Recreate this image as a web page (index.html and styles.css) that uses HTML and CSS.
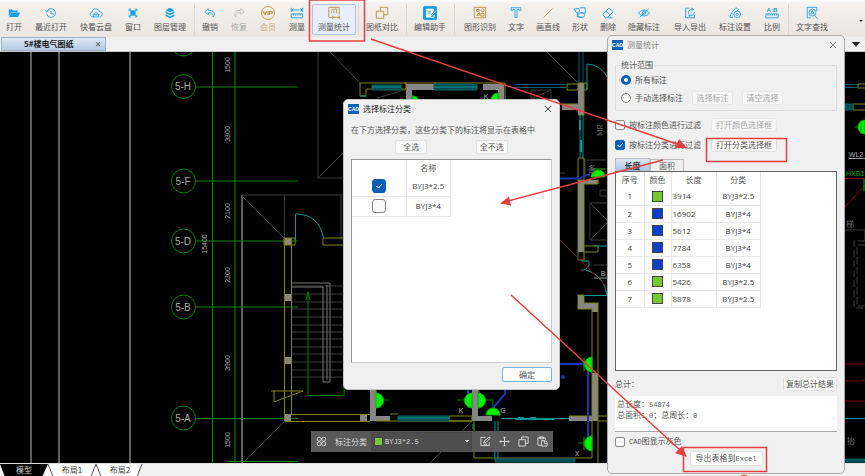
FILE: index.html
```html
<!DOCTYPE html>
<html lang="zh-CN">
<head>
<meta charset="utf-8">
<meta name="viewport" content="width=device-width, initial-scale=1">
<title>5#楼电气图纸</title>
<link rel="stylesheet" href="styles.css">
</head>
<body>
<div class="app">
  <header class="toolbar">
    <div class="group">
      <button class="tool"><svg viewBox="0 0 16 16"><path class="solid" d="M2 4h4l1 1h5v2H5l-3 5z"/><path class="solid" d="M5 7.500h10l-2.500 5H2.500z"/></svg>打开</button>
      <button class="tool"><svg viewBox="0 0 16 16"><path d="M3.500 6A5 5 0 1 1 3.200 9M1.500 5l2 2 2-2M8 5.500V9h3"/></svg>最近打开</button>
      <button class="tool"><svg viewBox="0 0 16 16"><path d="M4.500 12.500C0 12 1 7 3.500 7 4 2 11 2 12 6.500c4 0 4 6 0 6M5 12.500V9.500l3-2 3 2v3zM5 10h6"/></svg>快看云盘</button>
      <button class="tool"><svg viewBox="0 0 16 16"><path class="solid" d="M5 5h6v6H5z"/><path d="M3.500 6V3.500H6M10 3.500h2.500V6M3.500 10v2.500H6M12.500 10v2.500H10M4 4l2 2M12 4l-2 2M4 12l2-2M12 12l-2-2"/></svg>窗口</button>
      <button class="tool"><svg viewBox="0 0 16 16"><path class="solid" d="M8 2l5 2.500L8 7 3 4.500zM3 6l5 2.500L13 6v2L8 10.500 3 8zM3 9.500L8 12l5-2.500v2L8 14l-5-2.500z"/></svg>图层管理</button>
    </div>
    <div class="group ruled">
      <button class="tool"><svg viewBox="0 0 16 16"><path d="M6 3L2 6.500 6 10V8c4-1 6 1 5.500 4.500C15 9 12 4.500 6 5z"/></svg>撤销</button>
      <button class="tool muted"><svg viewBox="0 0 16 16"><path d="M10 3l4 3.500L10 10V8c-4-1-6 1-5.500 4.500C1 9 4 4.500 10 5z"/></svg>恢复</button>
      <button class="tool vip"><svg viewBox="0 0 16 16"><circle cx="8" cy="8" r="7.400"/><text x="8" y="10.500">VIP</text></svg>会员</button>
      <button class="tool"><svg viewBox="0 0 16 16"><path d="M1.500 2v5M14.500 2v5M2 4.500h12M4 3L2 4.500 4 6M12 3l2 1.500L12 6M1.500 9h13v4.500h-13zM4 9v2M6.500 9v2M9 9v2M11.500 9v2"/></svg>测量</button>
      <button class="tool gold active"><svg viewBox="0 0 16 16"><path d="M6 13H2V1.500h12V10M5 8.500V6M8 8.500V5M11 8.500V3.500M4.500 5l3-1.500 1 .5 2.500-1.500M6.500 11v4M14.500 11v4M7 13h7M8.500 12L7 13l1.500 1M12.500 12l1.500 1-1.500 1"/></svg>测量统计</button>
    </div>
    <div class="group ruled">
      <button class="tool gold"><svg viewBox="0 0 16 16"><path d="M6 6V1.500h8.500v8.500H10M1.500 6H10v8H1.500z"/></svg>图纸对比</button>
    </div>
    <div class="group ruled">
      <button class="tool"><svg viewBox="0 0 16 16"><rect class="solid" width="16" height="16" rx="2"/><path class="white-fill" d="M3.500 3h9v3L9 10v3H3.500z"/><path class="white" d="M9 12l5-6M12.500 10v3H9"/><path d="M5 6h4.500M5 8h4"/></svg>编辑助手</button>
    </div>
    <div class="group ruled tight">
      <button class="tool gold"><svg viewBox="0 0 16 16"><path d="M1.500 1.500h13v12h-13zM4 10.500h3.500v-3zM9 8.500h3.500v3H9zM4 4h3v2H4z"/><circle cx="11" cy="5" r="1.700"/></svg>图形识别</button>
      <button class="tool"><svg viewBox="0 0 16 16"><path d="M2.500 5V2h11v3h-2V4H9.200v9h-2.400V4H4.500v1z"/></svg>文字</button>
      <button class="tool gold"><svg viewBox="0 0 16 16"><path d="M3 13L13 3"/></svg>画直线</button>
      <button class="tool"><svg viewBox="0 0 16 16"><path d="M8 2h6v6H9M1.500 3.500l5-1 1 3.500-3 2.500zM5 7v5.500h5"/><ellipse cx="9.500" cy="10.500" rx="4" ry="2.700"/></svg>形状</button>
      <button class="tool"><svg viewBox="0 0 16 16"><path d="M2 9.500L9 2.500l5 4-7 7H5zM5.500 6l5 4M7 13.500h6"/></svg>删除</button>
      <button class="tool"><svg viewBox="0 0 16 16"><path d="M1.500 8Q8 1 14.500 8 8 15 1.500 8zM3 13L13.500 3"/><circle cx="8" cy="8" r="2"/></svg>隐藏标注</button>
    </div>
    <div class="group">
      <button class="tool"><svg viewBox="0 0 16 16"><path d="M7 2.500H3v11h10V10M6 9c0-4 2-5 5-5M9 2l3 2-3 2M13 7c0 3-3 4-6 4M8.500 9.500L6.500 11l2 1.500"/></svg>导入导出</button>
      <button class="tool"><svg viewBox="0 0 16 16"><path d="M2 13l2-5 5-6 3 2-2 2M2 13h4M4 8l2 2"/><circle cx="10.500" cy="9.500" r="3.800"/><circle cx="10.500" cy="9.500" r="1.300"/></svg>标注设置</button>
      <button class="tool ratio"><svg viewBox="0 0 16 16"><text x="8" y="6.500">A:B</text><path d="M1 9h14v4.500H1zM3.500 9v2M6 9v2M8.500 9v2M11 9v2M13 9v2"/></svg>比例</button>
    </div>
    <div class="group ruled">
      <button class="tool"><svg viewBox="0 0 16 16"><path d="M7 13.500H2.500v-12h11V6M11.500 11.500l3 3M6.500 9.500L8.500 5l2 4.500M7 8h3"/><circle cx="8.500" cy="7.500" r="4"/></svg>文字查找</button>
    </div>
    <button class="more" aria-label="更多"></button>
  </header>

  <nav class="doc-tabs">
    <div class="doc-tab"><span class="doc-name">5#楼电气图纸</span><button class="doc-close" aria-label="关闭图纸">×</button></div>
    <button class="tab-list" aria-label="图纸列表"></button>
  </nav>

  <main class="canvas">
    <svg class="drawing" viewBox="0 52 865 411" preserveAspectRatio="xMinYMin slice" aria-label="电气平面图">
      <g class="frame"><path d="M31 52V463M59 52V463M130 52V463M242 195V463"/></g>
      <g class="thin">
        <path d="M318 52V178H345M318 178l27-27M330 52l30 31M242 195H345M242 196l42 42M284.500 195V238M341 195V240M285 421L245 461M430 463l42-42M547 52l31 31M531 90h20v9h-20zM531 99l20-9M377 98l28-8"/>
        <path d="M292 286h52M292 294h52M292 302h52M292 309h52M292 317h52M292 325h52M292 332h52M292 339h52M292 347h52M292 354h52M292 362h52M292 370h52M292 377h52"/>
        <path class="lit" d="M292 283h38v99h-7V287h-31M327 285v95"/>
        <path d="M584 160h24M585 160v17M590 203h18v37h-18zM590 203l18 18M590 240l18-18M600 190h8v6h-8zM594 265h14M560 173h5M844 230h21v10"/>
        <path stroke-dasharray="7 3" d="M865 241h-11v67h11M865 245h-8v61h8"/>
      </g>
      <g class="axis">
        <path class="bright" d="M212.500 52V463M235 52V463"/>
        <path d="M195.500 87H298M195.500 181H298M195.500 241H298M195.500 307H298M195.500 418.500H298M228 461.500H298M308 292V395.500H344V284M306 300l2-8 2 8"/>
        <circle cx="183.500" cy="44" r="12"/><circle cx="183.500" cy="86.500" r="12"/><circle cx="183.500" cy="181" r="12"/><circle cx="183.500" cy="241" r="12"/><circle cx="183.500" cy="307" r="12"/><circle cx="183.500" cy="418" r="12"/>
        <path d="M377 400h12M457 400h36v10M854 127h6M578 443h8"/>
      </g>
      <g class="mark">
        <text x="183" y="90">5-H</text><text x="183" y="185">5-F</text><text x="183" y="245">5-D</text><text x="183" y="311">5-B</text><text x="183" y="422">5-A</text>
      </g>
      <g class="dim">
        <text transform="translate(230 65) rotate(-90)">1500</text><text transform="translate(230 134) rotate(-90)">3300</text><text transform="translate(230 211) rotate(-90)">2100</text><text transform="translate(207 244) rotate(-90)">15400</text><text transform="translate(230 275) rotate(-90)">2300</text><text transform="translate(230 363) rotate(-90)">3900</text><text transform="translate(230 440) rotate(-90)">1500</text>
        <text x="486" y="99">K</text><text x="461" y="413">K</text><text x="503" y="413">G</text><text x="577" y="456">X</text><text x="603" y="276">B</text><text x="856" y="157">WL2</text>
      </g>
      <path class="white-line" d="M849 158.500h16M594 278h14"/>
      <g class="wall">
        <path d="M284 238h7v7h-7zM284 294h7v7h-7zM284 357h7v7h-7zM284 414h7v7h-7zM360 414h7v7h-7z"/>
        <path d="M406 84h28v6h-22v10h-6zM483 84h21v16h-6V90h-15zM578 83h6v32h-6v-5h-16v-6h16zM578 180h20v4h-14v68h-6zM578 295h6v8h14v9h-6v-3h-14zM592 373h6v48h-29v-5h23zM370 389h6v27h14v5h-20zM472 389h6v27h14v5h-20z"/>
      </g>
      <g class="yellow">
        <path d="M284.500 238V421M291.500 238V414M284 238h11v7h-11zM345 238h-22v7h22M291 414.500h79M285 421.500h85M271 391h32l-29 11v-11"/>
        <path d="M360 83h46v6h-40v7h-6zM404 83h32M434 83h64M498 83h7v17M567 84h11v6h-11zM578 83h6v32h-6M584 83h3v7h-3M562 104h16M578 158h6v22h-6zM578 180v80h6v-76h14v-5M584 246h14v6h-14M578 295h6v8h14v160M578 295v14h14v149M449 416h23v5h-23zM376 421h96M390 414h8M376 389v9M478 389l4 10M569 416h23M598 416h10v5h-10M474 421v37h118M865 84h-7v4h7M865 104h-12v6h12"/>
      </g>
      <g class="teal">
        <path d="M295.500 240V214Q319 214 323.500 238"/>
        <path class="dark" d="M372 85h29v5h-29zM434 84h43v6h-43zM398 416h51v5h-51zM495 459h80v3h-80zM844 459h21v3h-21zM844 104h9v6h-9z"/>
        <path class="dim-teal" d="M579 52v31M583 52v31M514 84.500h53M514 87.500h53M844 84.500h14M844 87.500h14"/>
        <path d="M372 87h29M434 87h43M398 418h51M360 96h6"/>
        <path d="M580 115v43M583 115v43M587 90V64Q600 64 608 78M594 246h14M581 261h8v4q-3 6-8 5M586 270q18 5 21 25M583 295.500h25M501 418.500h68M515 419.500h40M844 418.500h21M495 421v38M498 421v38M473 424v5"/>
        <path class="thick" d="M580 120v10M581 140v12M518 418h6M530 418h6"/>
      </g>
      <path class="red" d="M560 240l48 48M844 364h21M844 381h19l2-3M844 401h21M844 178.500h21M844 208l21-23"/>
      <path class="blue" d="M560 178.500h20q6-4 10-4M560 364h26M588 364v79M505 389v5l-13 15M468 389v7"/>
      <circle class="blue" cx="563" cy="377" r="1"/>
      <g class="outlet">
        <path d="M376 393a7.500 7.500 0 0 1 0 15zM472 393a7.500 7.500 0 0 0 0 15zM478 393a7.500 7.500 0 0 1 0 15zM486 415a7 7 0 0 1 14 0zM592 357a7.500 7.500 0 0 0 0 15zM592 436a7.500 7.500 0 0 0 0 15zM591 177a7 7 0 0 1 14 0zM412 100v-4q6 0 6 4zM498 93a7 7 0 0 0-7 7h7zM865 120a7 7 0 0 0 0 14z"/>
        <path d="M584 358v13M584 437v13M861 121v13M591 169h14M864 179v12"/>
      </g>
      <text class="panel-mark" x="846" y="176">HXB1</text>
      <g class="note"><text transform="translate(603 136) rotate(-90)">MR</text><text x="588" y="172">备</text><text x="846" y="227">梯</text><text x="847" y="444">抬</text></g>
    </svg>

    <div class="quick-bar">
      <svg class="quick-icon" viewBox="0 0 12 12"><circle cx="3.500" cy="3.500" r="2.200"/><circle cx="8.500" cy="3.500" r="2.200"/><circle cx="3.500" cy="8.500" r="2.200"/><circle cx="8.500" cy="8.500" r="2.200"/></svg>
      <label class="quick-label" for="category">标注分类</label>
      <div class="category"><span class="swatch green"></span><select id="category"><option>BYJ3*2.5</option><option>BYJ3*4</option></select></div>
      <button aria-label="编辑"><svg class="quick-icon" viewBox="0 0 12 12"><path d="M6 1.500H1v9h9V7M4 7.500L5 5l5.500-4L11 2.500 6.500 7zM4 9h4"/></svg></button>
      <button aria-label="移动"><svg class="quick-icon" viewBox="0 0 12 12"><path d="M6 1v10M1 6h10M4.500 2.500L6 1l1.500 1.500M4.500 9.500L6 11l1.500-1.500M2.500 4.500L1 6l1.500 1.500M9.500 4.500L11 6 9.500 7.500"/></svg></button>
      <button aria-label="复制"><svg class="quick-icon" viewBox="0 0 12 12"><path d="M4 4V1h7v7H8M1 4h7v7H1z"/></svg></button>
      <button aria-label="粘贴"><svg class="quick-icon" viewBox="0 0 12 12"><path d="M5 10H1V2h8v2M3 1h4v2H3zM5 5h4l2 2v4H5zM8 5v3h3"/></svg></button>
    </div>
  </main>

  <footer class="layouts">
    <svg class="layout-shape" viewBox="0 0 144 13"><path class="white-tab" d="M42 0h100l-5 13H47z"/><path class="black-tab" d="M0 0h48l-6 13H5z"/><path class="edge" d="M48 0l5 13M91 13l5-13 5 13M142 0l-5 13"/></svg>
    <button class="layout current">模型</button><button class="layout">布局1</button><button class="layout">布局2</button>
  </footer>
</div>

<section class="dialog category-dialog" aria-label="选择标注分类">
  <header class="title"><span class="logo"><b>CAD</b></span><h2>选择标注分类</h2><button class="close" aria-label="关闭"><svg viewBox="0 0 8 8"><path d="M1 1l6 6M7 1L1 7"/></svg></button></header>
  <p class="hint">在下方选择分类，这些分类下的标注将显示在表格中</p>
  <div class="select-row"><button class="btn">全选</button><button class="btn">全不选</button></div>
  <div class="list">
    <table class="names">
      <thead><tr><th></th><th>名称</th></tr></thead>
      <tbody>
        <tr><td><input type="checkbox" id="c1" checked></td><td><label for="c1">BYJ3*2.5</label></td></tr>
        <tr><td><input type="checkbox" id="c2"></td><td><label for="c2">BYJ3*4</label></td></tr>
      </tbody>
    </table>
  </div>
  <div class="actions"><button class="btn primary">确定</button></div>
</section>

<section class="dialog stats-dialog" aria-label="测量统计">
  <header class="title"><span class="logo"><b>CAD</b></span><h2>测量统计</h2><button class="close" aria-label="关闭"><svg viewBox="0 0 8 8"><path d="M1 1l6 6M7 1L1 7"/></svg></button></header>
  <fieldset class="scope">
    <legend>统计范围</legend>
    <div class="line"><input type="radio" name="scope" id="all" checked><label for="all">所有标注</label></div>
    <div class="line"><input type="radio" name="scope" id="manual"><label for="manual">手动选择标注</label><button class="btn pick" disabled>选择标注</button><button class="btn pick" disabled>清空选择</button></div>
  </fieldset>
  <div class="line filter"><input type="checkbox" id="byColor"><label for="byColor">按标注颜色进行过滤</label><button class="btn wide" disabled>打开颜色选择框</button></div>
  <div class="line filter"><input type="checkbox" id="byType" checked><label for="byType">按标注分类进行过滤</label><button class="btn wide">打开分类选择框</button></div>
  <div class="tabs"><button class="tab selected">长度</button><button class="tab">面积</button></div>
  <div class="result">
    <table class="lengths">
      <thead><tr><th>序号</th><th>颜色</th><th>长度</th><th>分类</th></tr></thead>
      <tbody>
        <tr><td>1</td><td><span class="swatch green"></span></td><td>3914</td><td>BYJ3*2.5</td></tr>
        <tr><td>2</td><td><span class="swatch navy"></span></td><td>16902</td><td>BYJ3*4</td></tr>
        <tr><td>3</td><td><span class="swatch navy"></span></td><td>5612</td><td>BYJ3*4</td></tr>
        <tr><td>4</td><td><span class="swatch navy"></span></td><td>7784</td><td>BYJ3*4</td></tr>
        <tr><td>5</td><td><span class="swatch navy"></span></td><td>6358</td><td>BYJ3*4</td></tr>
        <tr><td>6</td><td><span class="swatch green"></span></td><td>5426</td><td>BYJ3*2.5</td></tr>
        <tr><td>7</td><td><span class="swatch green"></span></td><td>8878</td><td>BYJ3*2.5</td></tr>
      </tbody>
    </table>
  </div>
  <div class="total"><span>总计：</span><button class="btn">复制总计结果</button></div>
  <output class="summary">总长度：<span class="mono">54874</span><br>总面积：<span class="mono">0</span>；总周长：<span class="mono">0</span></output>
  <div class="line gray-line"><input type="checkbox" id="gray"><label for="gray"><span class="mono">CAD</span>图显示灰色</label></div>
  <div class="export"><button class="btn">导出表格到<span class="mono">Excel</span></button></div>
</section>

<svg class="guides" viewBox="0 0 865 476" preserveAspectRatio="xMinYMin slice" aria-hidden="true">
  <path d="M309.500 0h55v41h-55zM706.500 138.500h80v23h-80zM683.500 447.500h83v24h-83z"/>
  <path d="M371 39L680 145M663 160L506 201.500M511 295L680 450"/>
  <path class="head" d="M687 148l-12 0 4-9zM500 203.500l9-7 2 9zM687 457l-12-4 7-7z"/>
  <ellipse class="dot" cx="744" cy="476" rx="3" ry="1.500"/>
</svg>
</body>
</html>
```
FILE: styles.css
```css
* { box-sizing: border-box; }

:root {
  --ui: "Noto Sans CJK SC", "Noto Sans", sans-serif;
  --latin: "Open Sans", "Noto Sans", sans-serif;
  --mono: "Liberation Mono", monospace;
  --sky: #1ba0e4;
  --gold: #b8913c;
  --accent: #e53e3e;
  --primary: #0a5fb8;
}

body {
  margin: 0;
  font: 8px/12px var(--ui);
  color: #555;
  overflow: hidden;
}

button {
  font: inherit;
  color: inherit;
  border: 0;
  padding: 0;
  background: none;
}

.app {
  display: flex;
  flex-direction: column;
  height: 100vh;
  background: #f0f0f0;
}

/* Main toolbar */
.toolbar {
  display: flex;
  flex: none;
  height: 37px;
  padding: 4px 0 2px;
  background: linear-gradient(#fff 0, #f4f1ee 3px, #ebe6e1);
}

.group { display: flex; flex: none; gap: 1px; padding-right: 2px; }
.group.ruled { border-left: 1px solid #ddd8d3; padding-left: 1px; }
.group.tight { gap: 0; padding-left: 3px; }

.tool {
  display: flex;
  flex-direction: column;
  align-items: center;
  flex: none;
  gap: 1px;
  padding: 1px 5px;
  border: 1px solid transparent;
  border-radius: 2px;
  white-space: nowrap;
}

.tool svg {
  width: 16px;
  height: 16px;
  fill: none;
  stroke: var(--sky);
  stroke-width: 1;
}
.tool svg .solid { fill: var(--sky); stroke: none; }
.tool svg .white { stroke: #fff; }
.tool svg .white-fill { fill: #fff; stroke: none; }
.tool.gold svg { stroke: var(--gold); }
.tool.muted { color: #aaa; }
.tool.muted svg { stroke: #bbb; }
.tool.active { background: #e8effb; border-color: #adc4ee; }
.tool text {
  stroke: none;
  text-anchor: middle;
  font: bold 7px "Liberation Sans", sans-serif;
}
.tool.vip { color: #cfb27c; }
.tool.vip svg { stroke: #c0923a; fill: none; }
.tool.vip text { fill: #b58018; }
.tool.ratio text { fill: var(--sky); }

.more {
  align-self: center;
  margin: 2px 2px 0 auto;
  border: 2px solid transparent;
  border-top-color: #333;
  border-bottom: 0;
}

/* Drawing tabs */
.doc-tabs {
  display: flex;
  flex: none;
  justify-content: space-between;
  align-items: center;
  height: 15px;
  padding-left: 1px;
  border-bottom: 1px solid #c8c8c8;
}

.doc-tab {
  display: flex;
  align-items: center;
  width: 105px;
  height: 14px;
  padding: 0 4px 0 22px;
  background: linear-gradient(#dce8f5, #b5cae4);
  border: 1px solid #9db4d0;
  color: #222;
}
.doc-name { font-weight: bold; }
.doc-close { margin-left: auto; font: 10px/12px var(--latin); color: #555; }

.tab-list {
  margin-right: 5px;
  border: 4px solid transparent;
  border-top: 5px solid #222;
  border-bottom: 0;
}

/* Drawing area */
.canvas {
  position: relative;
  flex: 1;
  min-height: 0;
  background: #000;
  overflow: hidden;
}

.drawing { display: block; width: 100%; height: 100%; fill: none; stroke-width: 1; }
.frame { stroke: #5e5e5e; stroke-width: 2; }
.thin { stroke: #3c3c3c; }
.thin .lit { stroke: #777; }
.axis { stroke: #008000; }
.axis .bright { stroke: #009400; }
.mark text { fill: #aaa; font: 10px "Liberation Sans", sans-serif; text-anchor: middle; }
.dim text { fill: #b0b0b0; font: 7px "Liberation Sans", sans-serif; text-anchor: middle; }
.white-line { stroke: #999; }
.wall { fill: #868686; }
.yellow { stroke: #858500; }
.teal { stroke: #009696; }
.teal .dark { fill: #004c50; stroke: #006468; }
.teal .dim-teal { stroke: #005a70; }
.teal .thick { stroke-width: 2; }
.red { stroke: #7c0000; }
.blue { stroke: #1237b8; stroke-width: 2; }
.outlet { fill: #00f000; stroke: #00b400; }
.panel-mark { fill: #00a800; font: 7px "Liberation Sans", sans-serif; }
.note text { fill: #666; font: 8px var(--ui); }

.quick-bar {
  position: absolute;
  left: 311px;
  bottom: 11px;
  display: flex;
  align-items: center;
  gap: 8px;
  height: 21px;
  padding: 0 5px;
  background: #595959;
  color: #ddd;
}
.quick-icon { display: block; width: 11px; height: 11px; fill: none; stroke: #ddd; stroke-width: 1; }
.quick-label { margin-right: -4px; }
.category {
  display: flex;
  align-items: center;
  gap: 2px;
  width: 101px;
  height: 19px;
  padding: 0 2px;
  border: 1px solid #484848;
  background: #4e4e4e;
}
.category select {
  flex: 1;
  min-width: 0;
  appearance: none;
  border: 0;
  padding: 0;
  color: #ddd;
  font: 7px/12px var(--mono);
  background: linear-gradient(to bottom right, #eee 50%, transparent 50%) right 0 center / 2px 3px no-repeat,
    linear-gradient(to bottom left, #eee 50%, transparent 50%) right 2px center / 2px 3px no-repeat;
}

.swatch {
  display: block;
  flex: none;
  width: 11px;
  height: 11px;
  margin: 0 auto;
  border: 1px solid #444;
}
.category .swatch { width: 9px; height: 9px; margin: 0; }
.swatch.green { background: #78c536; }
.swatch.navy { background: #0a40c8; }

/* Layout tabs */
.layouts {
  position: relative;
  display: flex;
  flex: none;
  height: 13px;
  overflow: hidden;
  border-top: 1px solid #ddd;
  color: #333;
}
.layout-shape { position: absolute; left: 0; top: 0; width: 144px; height: 13px; }
.white-tab { fill: #fff; }
.black-tab { fill: #000; }
.edge { fill: none; stroke: #555; stroke-width: 1; }
.layout { position: relative; width: 48px; line-height: 12px; }
.layout.current { color: #ccc; }

/* Dialogs */
.dialog {
  position: absolute;
  display: flex;
  flex-direction: column;
  padding: 0 7px;
  border: 1px solid #c4c4c4;
  border-radius: 5px;
  background: #f0f0f0;
}

.category-dialog { left: 343px; top: 99px; width: 217px; height: 291px; }
.stats-dialog { left: 607px; top: 35px; width: 238px; height: 439px; border-color: #aaa; }

.title { display: flex; align-items: center; flex: none; gap: 4px; height: 18px; margin: 0 -3px; }
.title h2 { margin: 0; font: inherit; color: #222; }
.stats-dialog h2 { color: #888; }
.logo {
  display: grid;
  place-items: center;
  width: 11px;
  height: 10px;
  background: #0c62b8;
  color: #fff;
  font: 5px/10px "Liberation Sans", sans-serif;
}
.close { margin-left: auto; padding: 3px; }
.close svg { display: block; width: 8px; height: 8px; fill: none; stroke: #444; stroke-width: 1; }
.stats-dialog .close svg { stroke: #888; }

.hint { margin: 6px 0 4px; white-space: nowrap; }
.select-row { display: flex; justify-content: space-around; padding: 0 20px; }
.select-row .btn { width: 32px; }

.btn {
  height: 14px;
  padding: 0 2px;
  border: 1px solid #e0e0e0;
  border-radius: 2px;
  background: #fdfdfd;
  line-height: 12px;
  white-space: nowrap;
}
.btn:disabled { color: #aaa; background: #f6f6f6; border-color: #e8e8e8; }
.btn.primary { width: 50px; height: 15px; border-color: #7fb0dc; }

.list { flex: 1; margin-top: 5px; border: 1px solid #999; border-right-color: #ccc; border-bottom-color: #ccc; background: #fff; }
.actions { display: flex; justify-content: flex-end; padding: 4px 0 7px; }

table { border-collapse: collapse; table-layout: fixed; }
th, td { padding: 0; border-right: 1px solid #e8e8e8; border-bottom: 1px solid #e8e8e8; text-align: center; }
th { font-weight: normal; border-bottom: 0; }
td { font-family: var(--latin); color: #444; }

.names { width: 99px; }
.names th { height: 16px; }
.names td { height: 20px; }
.names th:first-child { width: 54px; }

input { appearance: none; flex: none; margin: 0; width: 10px; height: 10px; border: 1px solid #888; background: #f8f8f8; }
input[type="checkbox"] { border-radius: 2px; }
input[type="radio"] { border-radius: 50%; }
input[type="checkbox"]:checked {
  border-color: var(--primary);
  background: var(--primary) url("data:image/svg+xml,%3Csvg xmlns='http://www.w3.org/2000/svg' viewBox='0 0 10 10'%3E%3Cpath d='M2.500 5l2 2 3.500-4' fill='none' stroke='white'/%3E%3C/svg%3E") center / 10px no-repeat;
}
input[type="radio"]:checked { border: 3px solid var(--primary); background: #fff; }
.names input { display: block; width: 14px; height: 14px; margin: 0 auto; border-radius: 3px; }

.scope { height: 52px; margin: 5px 0 0; padding: 0 5px; border: 1px solid #ddd; }
.scope legend { padding: 0; }
.line { display: flex; align-items: center; flex: none; gap: 4px; height: 18px; white-space: nowrap; }
.btn.pick { width: 41px; margin-left: 5px; }
.filter { height: 20px; }
.scope + .filter { margin-top: 4px; }
.btn.wide { width: 66px; margin-left: 6px; }

.tabs { display: flex; flex: none; align-items: flex-end; height: 15px; margin-top: 1px; }
.tab { width: 34px; height: 12px; border: 1px solid #bbb; border-bottom: 0; line-height: 11px; }
.tab.selected { width: 35px; height: 13px; background: linear-gradient(#dce8f6, #a9c3e3); font-weight: bold; color: #333; }

.result { flex: 1; border: 1px solid #666; background: #fff; }
.lengths { width: 145px; }
.lengths th { height: 16px; }
.lengths td { height: 17px; }
.lengths th:first-child { width: 28px; }
.lengths th:nth-child(2) { width: 27px; }
.lengths th:nth-child(3) { width: 45px; }
.lengths td:nth-child(3) { text-align: left; padding-left: 1px; }

.total { display: flex; flex: none; justify-content: space-between; align-items: center; height: 25px; }
.summary { flex: none; height: 36px; padding: 3px 2px; background: #fff; border-bottom: 1px solid #aaa; line-height: 9px; }
.mono { font-family: var(--mono); font-size: 7px; }
.gray-line { height: 19px; }
.export { display: flex; flex: none; justify-content: center; height: 22px; }
.export .btn { width: 73px; height: 15px; }

/* Step guides over the window */
.guides { position: absolute; left: 0; top: 0; width: 100%; height: 100%; fill: none; stroke: var(--accent); stroke-width: 1.5; pointer-events: none; }
.guides .head { fill: var(--accent); stroke: none; }
.guides .dot { fill: #f26a30; stroke: none; }
```
